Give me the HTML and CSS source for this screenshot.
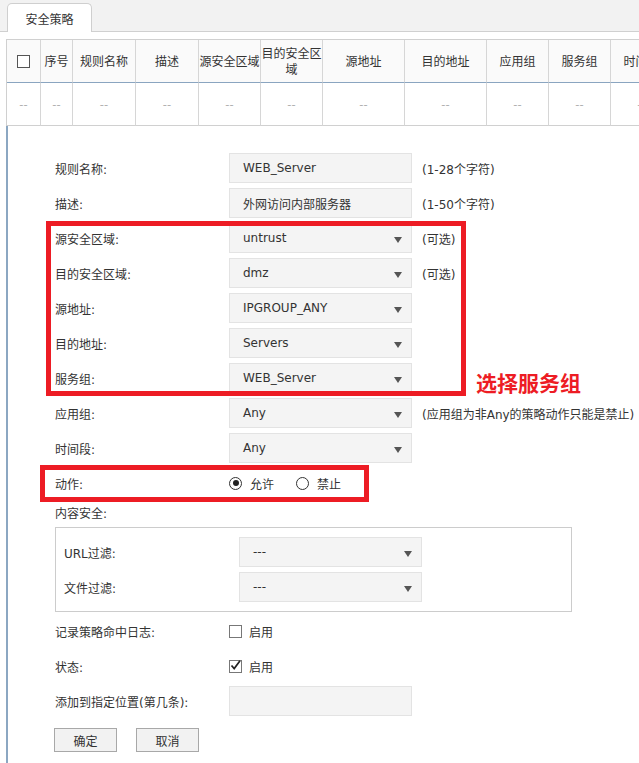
FILE: index.html
```html
<!DOCTYPE html>
<html lang="zh-CN">
<head>
<meta charset="utf-8">
<title>安全策略</title>
<link rel="stylesheet" href="styles.css">
</head>
<body>
<div class="tabbar"><div class="tab">安全策略</div></div>

<div class="grid">
  <div class="grow head">
    <div class="cell c1"><span class="chk"></span></div>
    <div class="cell c2">序号</div>
    <div class="cell c3">规则名称</div>
    <div class="cell c3">描述</div>
    <div class="cell c4">源安全区域</div>
    <div class="cell c4">目的安全区域</div>
    <div class="cell c5">源地址</div>
    <div class="cell c5">目的地址</div>
    <div class="cell c4">应用组</div>
    <div class="cell c4">服务组</div>
    <div class="cell c4">时间段</div>
  </div>
  <div class="grow body">
    <div class="cell c1">--</div>
    <div class="cell c2">--</div>
    <div class="cell c3">--</div>
    <div class="cell c3">--</div>
    <div class="cell c4">--</div>
    <div class="cell c4">--</div>
    <div class="cell c5">--</div>
    <div class="cell c5">--</div>
    <div class="cell c4">--</div>
    <div class="cell c4">--</div>
    <div class="cell c4">--</div>
  </div>
</div>

<div class="panel">
  <div class="frow"><div class="lbl">规则名称:</div><div class="field">WEB_Server</div><div class="note">(1-28个字符)</div></div>
  <div class="frow"><div class="lbl">描述:</div><div class="field">外网访问内部服务器</div><div class="note">(1-50个字符)</div></div>
  <div class="frow"><div class="lbl">源安全区域:</div><div class="field select">untrust<span class="arrow"></span></div><div class="note">(可选)</div></div>
  <div class="frow"><div class="lbl">目的安全区域:</div><div class="field select">dmz<span class="arrow"></span></div><div class="note">(可选)</div></div>
  <div class="frow"><div class="lbl">源地址:</div><div class="field select">IPGROUP_ANY<span class="arrow"></span></div></div>
  <div class="frow"><div class="lbl">目的地址:</div><div class="field select">Servers<span class="arrow"></span></div></div>
  <div class="frow"><div class="lbl">服务组:</div><div class="field select">WEB_Server<span class="arrow"></span></div></div>
  <div class="frow"><div class="lbl">应用组:</div><div class="field select">Any<span class="arrow"></span></div><div class="note">(应用组为非Any的策略动作只能是禁止)</div></div>
  <div class="frow"><div class="lbl">时间段:</div><div class="field select">Any<span class="arrow"></span></div></div>
  <div class="frow"><div class="lbl">动作:</div>
    <div class="opts">
      <span class="radio on"></span><span class="otext">允许</span>
      <span class="radio"></span><span class="otext">禁止</span>
    </div>
  </div>
  <div class="frow short"><div class="lbl">内容安全:</div></div>
  <div class="secbox">
    <div class="frow"><div class="lbl in">URL过滤:</div><div class="field select">---<span class="arrow"></span></div></div>
    <div class="frow last"><div class="lbl in">文件过滤:</div><div class="field select">---<span class="arrow"></span></div></div>
  </div>
  <div class="frow"><div class="lbl">记录策略命中日志:</div><span class="cbox"></span><span class="ctext">启用</span></div>
  <div class="frow"><div class="lbl">状态:</div><span class="cbox checked"><svg width="13" height="13" viewBox="0 0 13 13"><path d="M2.5 6.5 L5.2 9.6 L11 1.8" fill="none" stroke="#222" stroke-width="1.7"/></svg></span><span class="ctext">启用</span></div>
  <div class="frow"><div class="lbl">添加到指定位置(第几条):</div><div class="field"></div></div>
  <div class="btns"><button class="btn">确定</button><button class="btn">取消</button></div>
</div>

<div class="mark mark1"></div>
<div class="mark mark2"></div>
<div class="marktext">选择服务组</div>
</body>
</html>
```
FILE: styles.css
```css
* { box-sizing: border-box; }
html, body { margin: 0; padding: 0; }
body {
  font-family: "DejaVu Sans", "Noto Sans CJK SC", sans-serif;
  font-size: 12px;
  color: #333;
  width: 639px;
  height: 763px;
  overflow: hidden;
  position: relative;
  background: #fff;
}
.tabbar {
  height: 32px;
  background: #f2f2f2;
  border-bottom: 1px solid #d0d0d0;
  padding: 3px 0 0 7px;
  display: flex;
  align-items: flex-start;
}
.tab {
  width: 85px;
  height: 29px;
  background: #fff;
  border: 1px solid #cfcfcf;
  border-bottom: none;
  border-radius: 5px 5px 0 0;
  text-align: center;
  line-height: 29px;
  font-family: "Noto Sans CJK SC", sans-serif;
}
.grid {
  margin: 7px 0 0 6px;
  border-top: 1px solid #d0d0d0;
  border-left: 1px solid #d0d0d0;
  width: 633px;
  overflow: hidden;
}
.grow { display: flex; }
.cell {
  flex: none;
  height: 43px;
  border-right: 1px solid #d6d6d6;
  display: flex;
  align-items: center;
  justify-content: center;
  text-align: center;
  line-height: 16px;
  font-family: "Noto Sans CJK SC", sans-serif;
}
.head .cell { background: #fafafa; border-bottom: 1px solid #8aa5c0; }
.body .cell { border-bottom: 1px solid #d0d0d0; color: #aaa; }
.c1 { width: 34px; }
.c2 { width: 32px; }
.c3 { width: 63px; }
.c4 { width: 62px; }
.c5 { width: 82px; }
.chk {
  display: block;
  width: 13px;
  height: 13px;
  border: 1.5px solid #555;
  background: #fff;
}
.panel {
  margin-left: 6px;
  border-left: 2px solid #8ca7c2;
  padding: 27px 0 0 47px;
  height: 637px;
}
.frow {
  display: flex;
  align-items: center;
  height: 30px;
  margin-bottom: 5px;
}
.frow.short { height: 19px; }
.frow.last { margin-bottom: 0; }
.lbl { width: 174px; flex: none; }
.lbl.in { width: 175px; }
.field {
  position: relative;
  width: 183px;
  height: 30px;
  flex: none;
  background: #f4f4f4;
  border: 1px solid #e3e3e3;
  padding-left: 13px;
  display: flex;
  align-items: center;
}
.arrow {
  position: absolute;
  right: 9px;
  top: 13px;
  width: 0;
  height: 0;
  border-left: 4.5px solid transparent;
  border-right: 4.5px solid transparent;
  border-top: 6px solid #555;
}
.note { margin-left: 10px; white-space: nowrap; }
.opts { display: flex; align-items: center; }
.radio {
  width: 13px;
  height: 13px;
  border: 1px solid #333;
  border-radius: 50%;
  background: #fff;
  display: flex;
  align-items: center;
  justify-content: center;
}
.radio.on::after {
  content: "";
  width: 6px;
  height: 6px;
  border-radius: 50%;
  background: #222;
}
.otext { margin: 0 22px 0 8px; }
.secbox {
  width: 517px;
  border: 1px solid #ccc;
  padding: 9px 0 9px 8px;
  margin: 0 0 4px 0;
}
.cbox {
  width: 13px;
  height: 13px;
  border: 1.5px solid #777;
  background: #fff;
  position: relative;
  flex: none;
}
.cbox svg { position: absolute; left: -1.5px; top: -1.5px; }
.ctext { margin-left: 7px; }
.btns { display: flex; gap: 19px; margin: 12px 0 0 -1px; }
.btn {
  width: 63px;
  height: 24px;
  border: 1px solid #a8a8a8;
  background: #f2f2f2;
  font-family: "Noto Sans CJK SC", sans-serif;
  font-size: 12px;
  color: #333;
  padding: 0;
  border-radius: 0;
}
.mark {
  position: absolute;
  border: 5px solid #ed1c24;
}
.mark1 { left: 46px; top: 221px; width: 420px; height: 175px; }
.mark2 { left: 40px; top: 465px; width: 329px; height: 37px; }
.marktext {
  position: absolute;
  left: 476px;
  top: 371px;
  font-family: "Noto Sans CJK SC", sans-serif;
  font-size: 21px;
  line-height: 22px;
  font-weight: bold;
  color: #ed1c24;
  white-space: nowrap;
}
```
